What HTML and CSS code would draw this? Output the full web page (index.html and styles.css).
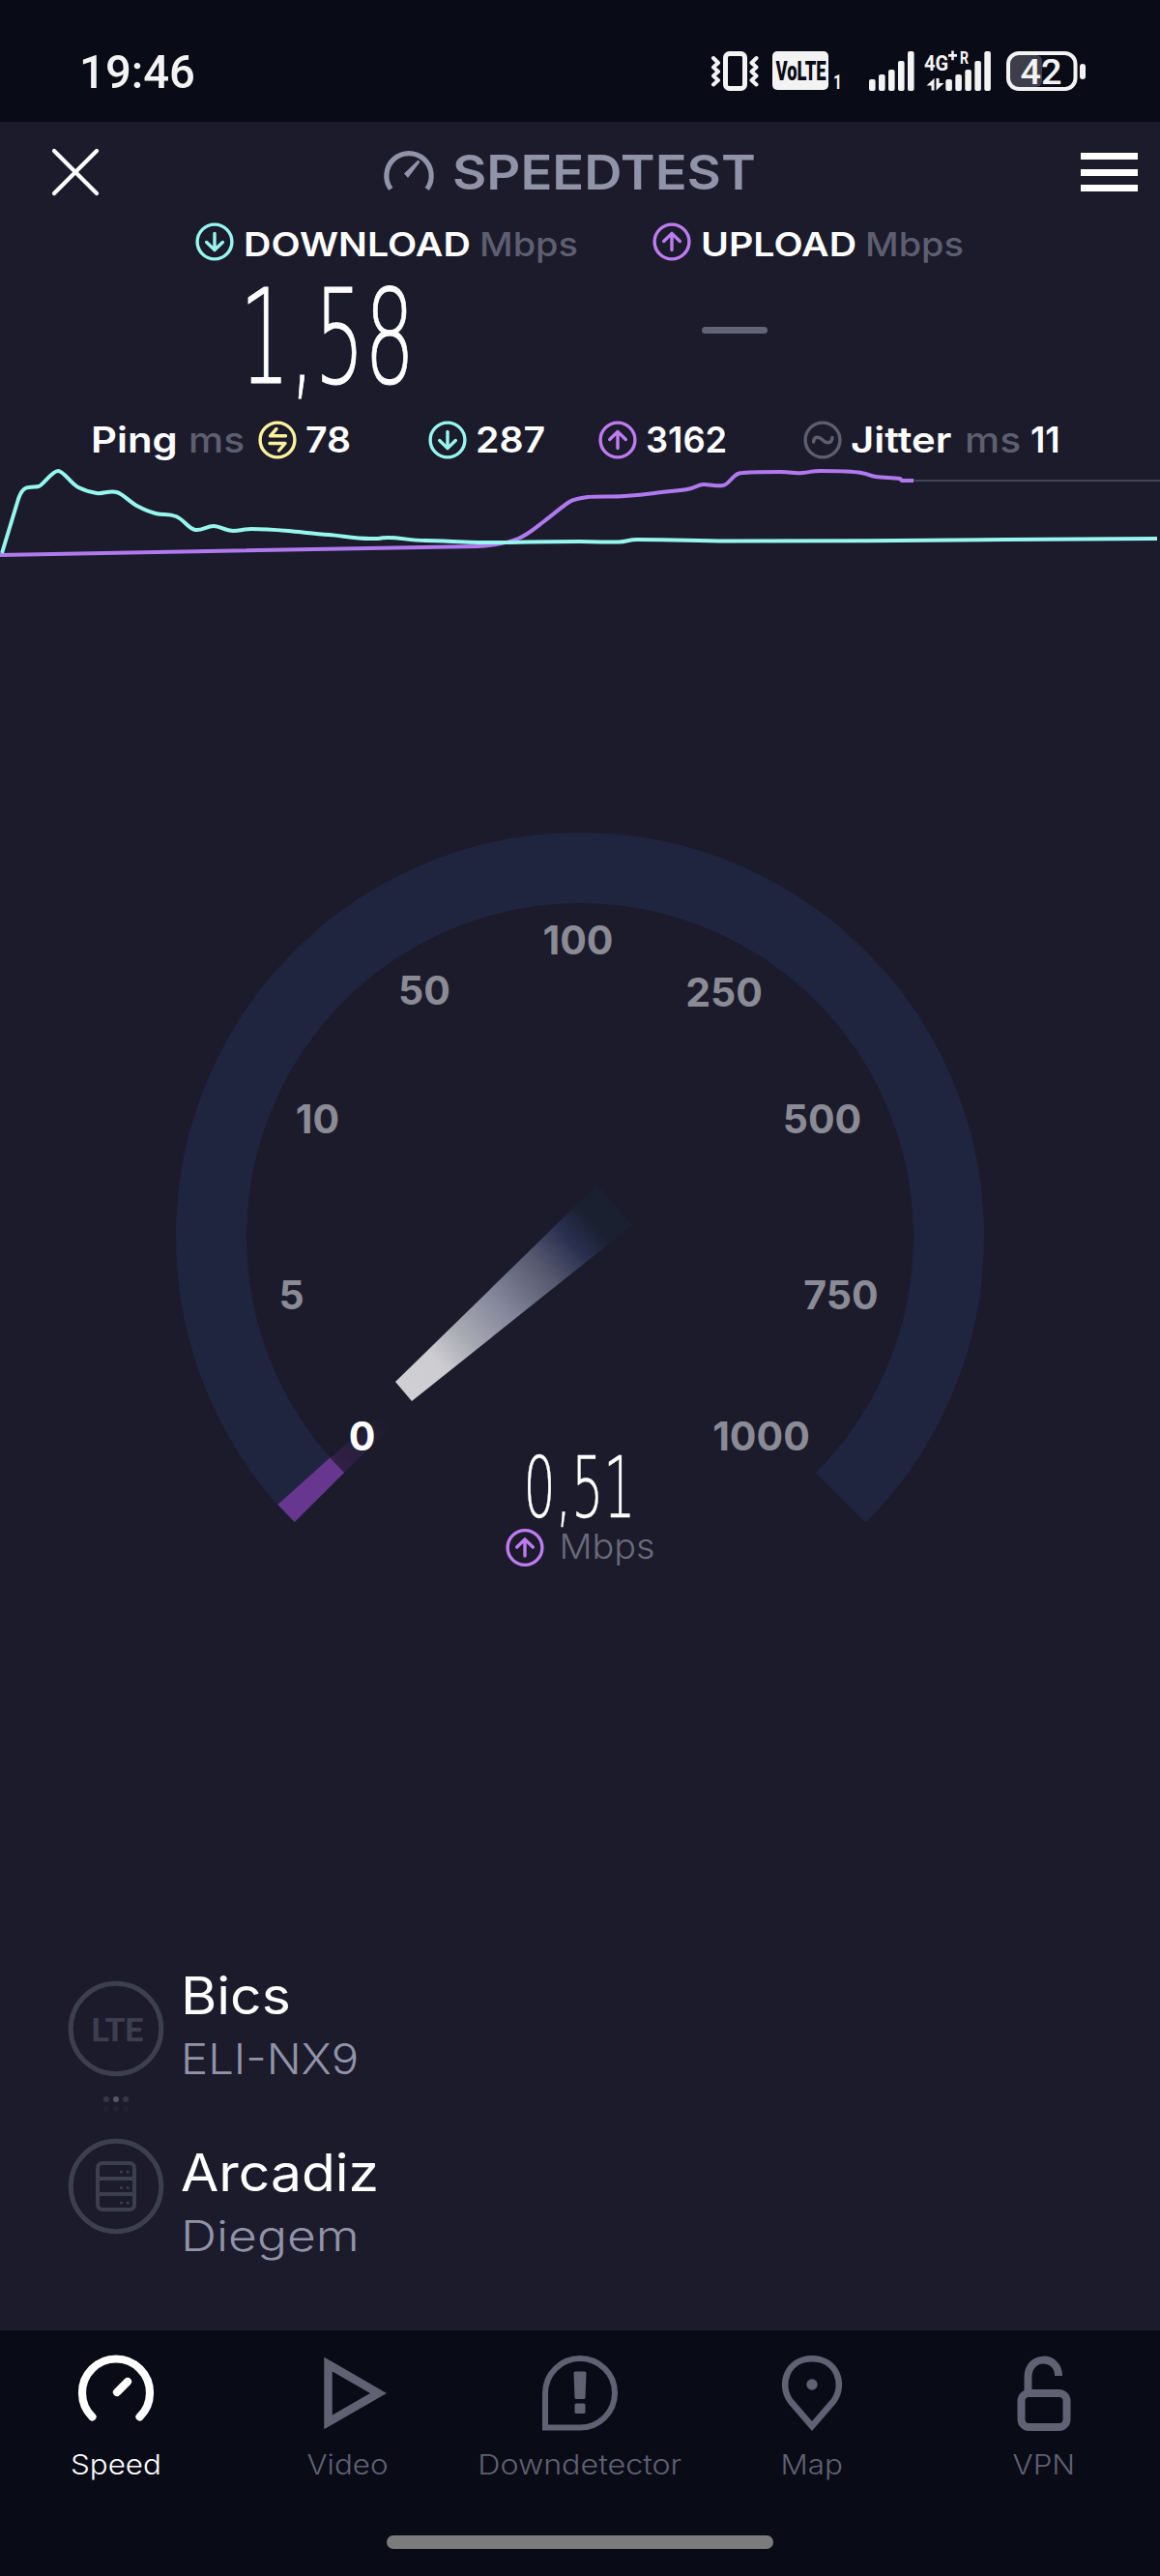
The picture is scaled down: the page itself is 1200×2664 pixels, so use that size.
FILE: index.html
```html
<!DOCTYPE html>
<html lang="en">
<head>
  <meta charset="UTF-8" />
  <meta name="viewport" content="width=device-width, initial-scale=1.0"/>
  <title>Speedtest</title>
  <link rel="stylesheet" href="styles.css">
</head>
<body>
<!-- Shared icons -->
<svg class="defs" width="0" height="0">
  <symbol id="down" viewBox="0 0 40 40">
    <circle cx="20" cy="20" r="17.9"/>
    <path d="M20 11.5V28M11.7 20.5L20 28.6L28.3 20.5"/>
  </symbol>
  <symbol id="up" viewBox="0 0 40 40">
    <circle cx="20" cy="20" r="17.9"/>
    <path d="M20 28.5V12M11.7 19.5L20 11.4L28.3 19.5"/>
  </symbol>
  <symbol id="idle" viewBox="0 0 40 40">
    <circle cx="20" cy="20" r="17.9"/>
    <path d="M19 8.500L12.500 15.800H28.500M12 23.500H28L21.500 31"/>
  </symbol>
  <symbol id="jitter" viewBox="0 0 40 40">
    <circle cx="20" cy="20" r="17.9"/>
    <path d="M10.5 22C11 16 16 16 20 20S29.500 24 30 17.500"/>
  </symbol>
</svg>

<div class="app">
  <!-- Status bar -->
  <div class="status-bar">
    <svg width="1200" height="126" viewBox="0 0 1200 126">
      <g class="status-text">
        <text x="82" y="91" font-size="49" textLength="120" lengthAdjust="spacingAndGlyphs">19:46</text>
        <text x="956" y="73" font-size="22" font-weight="700" textLength="25" lengthAdjust="spacingAndGlyphs">4G</text>
        <text x="993" y="66" font-size="18" font-weight="700" textLength="9" lengthAdjust="spacingAndGlyphs">R</text>
        <text x="862" y="92" font-size="20" font-weight="700" textLength="9" lengthAdjust="spacingAndGlyphs">1</text>
      </g>
      <rect x="750.5" y="55.500" width="20" height="36" rx="4" class="line5"/>
      <path class="line4" d="M738 60L743 65L738 69.500L743 74L738 78.500L743 83L738 87.500M782.500 60L777.500 65L782.500 69.500L777.500 74L782.500 78.500L777.500 83L782.500 87.500"/>
      <rect x="799" y="53" width="58" height="40" rx="5" class="solid"/>
      <text x="802.500" y="83" class="volte" textLength="52" lengthAdjust="spacingAndGlyphs">VoLTE</text>
      <g class="solid">
        <rect x="899" y="82" width="6.600" height="12" rx="2"/>
        <rect x="909" y="77" width="6.600" height="17" rx="2"/>
        <rect x="919" y="72" width="6.600" height="22" rx="2"/>
        <rect x="929" y="63" width="6.600" height="31" rx="2"/>
        <rect x="939" y="53" width="6.600" height="41" rx="2"/>
        <rect x="978.300" y="82" width="6.600" height="12" rx="2"/>
        <rect x="988.300" y="77" width="6.600" height="17" rx="2"/>
        <rect x="998.300" y="72" width="6.600" height="22" rx="2"/>
        <rect x="1008.300" y="63" width="6.600" height="31" rx="2"/>
        <rect x="1018.300" y="53" width="6.600" height="41" rx="2"/>
        <path d="M981 56h3.200v-3.500h2.600v3.500h3.200v2.800h-3.200v3.500h-2.600v-3.500h-3.200z"/>
        <path d="M966.500 81V93.500H963.500V88.500H958.500zM968.500 93.500V81H971.500V86H976.500z"/>
        <rect x="1117" y="66" width="6" height="16" rx="3"/>
      </g>
      <rect x="1045" y="57" width="33" height="33" rx="6" fill="#3e3e4a"/>
      <rect x="1043" y="55" width="69.500" height="37" rx="11" class="line4"/>
      <text x="1055.500" y="87" class="status-text" font-size="37" textLength="43" lengthAdjust="spacingAndGlyphs">42</text>
    </svg>
  </div>

  <!-- Header -->
  <div class="header">
    <svg class="close" width="52" height="52" viewBox="0 0 52 52"><path d="M4 4L48 48M48 4L4 48"/></svg>
    <div class="brand">
      <svg width="54" height="48" viewBox="0 0 54 48">
        <path d="M8.300 44.500A23.200 23.200 0 1 1 45.700 44.500" fill="none" stroke="#9193a8" stroke-width="5.200"/>
        <path d="M22 28.500L36.500 14.500L38.500 16.500L26 33z" fill="#9193a8"/>
      </svg>
      <span>SPEEDTEST</span>
    </div>
    <div class="menu"><i></i><i></i><i></i></div>
  </div>

  <!-- Download / upload -->
  <div class="rates">
    <svg class="icon cyan"><use href="#down"/></svg>
    <b>DOWNLOAD</b>
    <span>Mbps</span>
    <svg class="icon purple"><use href="#up"/></svg>
    <b>UPLOAD</b>
    <span>Mbps</span>
  </div>
  <div class="values">
    <svg width="200" height="155" viewBox="0 0 200 155">
      <text class="thin big" x="8" y="121" textLength="181" lengthAdjust="spacingAndGlyphs">1,58</text>
    </svg>
    <div class="empty"></div>
  </div>

  <!-- Latency -->
  <div class="latency">
    <b>Ping</b>
    <span>ms</span>
    <svg class="icon yellow"><use href="#idle"/></svg>
    <b class="num">78</b>
    <svg class="icon cyan"><use href="#down"/></svg>
    <b class="num">287</b>
    <svg class="icon purple"><use href="#up"/></svg>
    <b class="ones">3162</b>
    <svg class="icon gray"><use href="#jitter"/></svg>
    <b>Jitter</b>
    <span>ms</span>
    <b class="ones">11</b>
  </div>

  <svg class="graph" width="1200" height="121" viewBox="0 479 1200 121">
    <path stroke="#434453" stroke-width="2" d="M945 497H1200"/>
    <path stroke="#b07aee" d="M0 574L494 565C502 565 507 564 513 563Q526 561 536 557C546 553 555 545 563 539S580 525 589 519C594 516 600 515 608 514C620 513 634 514 646 513Q663 512 677 510C690 508 700 508 711 506S721 501 728 501S741 503 748 502S758 489 768 489C782 488 794 488 807 488S820 490 830 489S839 487 849 487S880 487 891 489S898 492 906 493S920 494 931 495L933 497H945"/>
    <path stroke="#97f7ef" d="M2 572L19 516Q23 504 30 504C35 503 36 504 40 503S54 487 60 487S73 500 81 504S93 509 100 510S113 507 120.500 509S134 519 141.500 523S153 529 161 531S174 531 182 534S195 547 202 548S214 544 221 544S233 549 241 549S252 547 260 547S286 548 298 549S326 552 340 553S366 557 383 557S390 556 402 556S425 559 440 559S485 561 505 561S560 560 600 560C620 560 627 561 640 560.500C649 560 650 558 659 558C700 558 710 559 753 559.500S990 559 1040 558L1197 557"/>
  </svg>

  <!-- Gauge -->
  <svg class="gauge" width="1200" height="1040" viewBox="0 600 1200 1040">
    <defs>
      <linearGradient id="needle" gradientUnits="userSpaceOnUse" x1="417" y1="1439" x2="635" y2="1246">
        <stop offset="0" stop-color="#cfcfd4"/>
        <stop offset=".16" stop-color="#cdcdd1"/>
        <stop offset=".3" stop-color="#a6a8b1"/>
        <stop offset=".47" stop-color="#83859a"/>
        <stop offset=".66" stop-color="#55586e"/>
        <stop offset=".8" stop-color="#29304f"/>
        <stop offset=".9" stop-color="#1b2031"/>
        <stop offset="1" stop-color="#1b2030"/>
      </linearGradient>
      <linearGradient id="trail" gradientUnits="userSpaceOnUse" x1="348" y1="1516" x2="400" y2="1468">
        <stop offset="0" stop-color="#332047"/>
        <stop offset="1" stop-color="#1b1b2c"/>
      </linearGradient>
    </defs>
    <path d="M330.240 1548.760A381.500 381.500 0 1 1 869.760 1548.760" fill="none" stroke="#20253f" stroke-width="73"/>
    <path d="M341 1508L392 1465L408 1473L356 1523z" fill="url(#trail)"/>
    <path d="M287.300 1556L341.300 1507.600L356 1523L304.800 1574z" fill="#67368f"/>
    <path d="M409 1429L617.500 1225.500L654 1267L426 1449z" fill="url(#needle)"/>
    <g class="scale">
      <text x="374.500" y="1500" class="on">0</text>
      <text x="301.500" y="1354">5</text>
      <text x="328.500" y="1172">10</text>
      <text x="439" y="1039">50</text>
      <text x="598" y="987">100</text>
      <text x="749" y="1041">250</text>
      <text x="850.500" y="1172">500</text>
      <text x="870" y="1354">750</text>
      <text x="787.500" y="1500">1000</text>
    </g>
    <text class="thin small" x="541.500" y="1568.500" textLength="116" lengthAdjust="spacingAndGlyphs">0,51</text>
    <use href="#up" class="purple ring" x="523" y="1580.500" width="40" height="40"/>
    <text class="unit" x="578.500" y="1611.500" textLength="99" lengthAdjust="spacingAndGlyphs">Mbps</text>
  </svg>

  <!-- Provider and server -->
  <div class="servers">
    <div class="server-icons">
      <svg width="100" height="100" viewBox="0 0 100 100">
        <circle cx="50" cy="50" r="46.800"/>
        <text x="24.500" y="62.500">LTE</text>
      </svg>
      <svg width="100" height="63" viewBox="0 0 100 63">
        <g stroke="none">
          <circle cx="40" cy="23" r="3" fill="#353646"/><circle cx="50" cy="23" r="3" fill="#565663"/><circle cx="60" cy="23" r="3" fill="#353646"/>
          <circle cx="40" cy="33" r="3" fill="#202031"/><circle cx="50" cy="33" r="3" fill="#222233"/><circle cx="60" cy="33" r="3" fill="#202031"/>
        </g>
      </svg>
      <svg width="100" height="100" viewBox="0 0 100 100">
        <circle cx="50" cy="50" r="46.800"/>
        <rect x="31" y="26" width="38" height="48" rx="5" stroke-width="4"/>
        <path d="M31 42H69M31 58H69" stroke-width="4"/>
        <path d="M55.500 35h.1M62.200 35h.1M55.500 51.500h.1M62.200 51.500h.1M55.500 67h.1M62.200 67h.1" stroke-width="3.200" stroke-linecap="round"/>
      </svg>
    </div>
    <div class="server-info">
      <h2>Bics</h2>
      <p>ELI-NX9</p>
      <h2>Arcadiz</h2>
      <p class="city">Diegem</p>
    </div>
  </div>

  <!-- Bottom navigation -->
  <div class="nav">
    <div class="tab active">
      <svg width="90" height="90" viewBox="0 0 90 90"><path d="M20.500 69.500A35 35 0 1 1 69.500 69.500M46 44L57 33" stroke-width="8.200" stroke-linecap="round"/></svg>
      <span>Speed</span>
    </div>
    <div class="tab">
      <svg width="90" height="90" viewBox="0 0 90 90"><path d="M24.500 15L76.500 45L24.500 75z" stroke-width="8.500"/></svg>
      <span>Video</span>
    </div>
    <div class="tab">
      <svg width="90" height="90" viewBox="0 0 90 90"><path d="M45 9A36 35.750 0 0 1 45 80.500H9V45A36 36 0 0 1 45 9z" stroke-width="6"/><path d="M40 24H50L49 49.500H41zM41 57H49V64.500H41z" fill="#606172" stroke-width="3" stroke-linejoin="round"/></svg>
      <span class="wide">Downdetector</span>
    </div>
    <div class="tab">
      <svg width="90" height="90" viewBox="0 0 90 90"><path d="M45 79L22.500 53C10 35 20 9.300 45 9.300S80 35 67.500 53z" stroke-width="6.500"/><circle cx="45" cy="36" r="5.700" fill="#606172" stroke="none"/></svg>
      <span>Map</span>
    </div>
    <div class="tab">
      <svg width="90" height="90" viewBox="0 0 90 90"><rect x="21.500" y="45" width="47" height="35" rx="8" stroke-width="8"/><path d="M28.500 45V28C28.500 5 60 5 60 27" stroke-width="8"/></svg>
      <span>VPN</span>
    </div>
  </div>
  <div class="home"><i></i></div>
</div>
</body>
</html>
```
FILE: styles.css
```css
* { box-sizing: border-box; }
body {
  margin: 0;
  font-family: 'Inter', sans-serif;
  background: #1b1b2c;
  color: #fff;
}
svg { display: block; overflow: visible; }
.defs { position: absolute; }
.app { width: 1200px; height: 2664px; overflow: hidden; }

.status-bar { height: 126px; background: #090b17; }
.status-text { font-family: 'Roboto', sans-serif; font-weight: 500; fill: #f3f3f3; }
.solid { fill: #f3f3f3; }
.line4, .line5 { fill: none; stroke: #f3f3f3; stroke-width: 4; stroke-linejoin: round; stroke-linecap: round; }
.line5 { stroke-width: 5; }
.volte { font-family: 'Roboto', sans-serif; font-weight: 900; font-size: 27px; fill: #090b17; }

.header {
  height: 104px; padding: 0 23px 0 52px;
  display: flex; align-items: center;
}
.close { fill: none; stroke: #fff; stroke-width: 4.2; stroke-linecap: round; }
.brand {
  display: flex; align-items: center; gap: 18px;
  margin-left: 292px;
  color: #9193a8; font-size: 50px; font-weight: 600; line-height: 60px;
}
.brand svg { margin-top: -6px; }
.brand span { transform: scaleX(1.087); transform-origin: left; }
.menu { display: flex; flex-direction: column; gap: 9.5px; margin-left: auto; }
.menu i { width: 59px; height: 7px; background: #fff; }

.icon { width: 40px; height: 40px; }
.icon, .ring { fill: none; stroke-width: 3.4; stroke-linecap: round; stroke-linejoin: round; }
.cyan { stroke: #97f7ef; }
.purple { stroke: #bf7bf0; }
.yellow { stroke: #fdf29b; }
.gray { stroke: #5d5f70; }

.rates {
  display: grid; height: 45px; align-items: center;
  grid-template-columns: 50px 244px 179px 50px 170px 120px;
  padding-left: 202px; font-size: 34.5px; white-space: nowrap;
}
.rates .icon { margin-top: -6px; }
.rates b, .latency b { font-weight: 600; transform: scaleX(1.14); transform-origin: left; }
.rates span, .latency span { color: #5d5f70; font-weight: 500; transform: scaleX(1.1); transform-origin: left; }
.values { display: flex; height: 155px; align-items: center; padding-left: 240px; gap: 286px; }
.empty { width: 68px; height: 7px; margin-top: -23px; border-radius: 4px; background: #626374; }
.thin { font-family: 'DejaVu Sans', sans-serif; font-weight: 200; fill: #fff; stroke: #fff; }
.big { font-size: 135px; stroke-width: 1px; }
.small { font-size: 88px; stroke-width: .5px; }

.latency {
  display: grid; height: 49px; align-items: center;
  grid-template-columns: 101px 72px 49px 127px 49px 127px 49px 163px 49px 118px 68px 60px;
  padding-left: 94px; font-size: 37px; white-space: nowrap;
}
.latency b { transform: scaleX(1.13); }
.latency .num { transform: scaleX(1.06); }
.latency .ones { transform: scaleX(.98); }
.graph { fill: none; stroke-width: 4; }

.scale { font-size: 41px; font-weight: 700; fill: #8b8b95; text-anchor: middle; }
.scale .on { fill: #fff; }
.unit { font-size: 36px; font-weight: 300; fill: #6a6b7b; }

.servers { display: flex; height: 770px; padding: 391px 0 0 70px; }
.server-icons { padding-top: 17px; fill: none; stroke: #3d3e4e; stroke-width: 5; }
.server-icons text { font-family: 'Roboto', sans-serif; font-size: 34px; font-weight: 700; letter-spacing: -1.500px; letter-spacing: -.5px; fill: #3d3e4e; stroke: none; }
.server-info { padding-left: 17px; }
.server-info h2, .server-info p { transform: scaleX(1.075); transform-origin: left; }
.server-info h2 { margin: 0; font-size: 53px; font-weight: 400; line-height: 66px; }
.server-info p { margin: 0 0 52px; font-size: 44px; font-weight: 300; line-height: 65px; color: #9193a8; }
.server-info .city { transform: scaleX(1.17); }

.nav { display: flex; height: 190px; padding-top: 20px; background: #090b17; }
.tab {
  width: 240px; display: flex; flex-direction: column; align-items: center;
  color: #606172; font-size: 28px; font-weight: 300; line-height: 40px;
}
.tab svg { fill: none; stroke: #606172; margin-bottom: 9px; }
.tab span { transform: scaleX(1.12); }
.tab .wide { transform: scaleX(1.15); }
.tab.active { color: #fff; }
.tab.active svg { stroke: #fff; }
.home { height: 64px; padding: 22px 400px; background: #090b17; }
.home i { display: block; height: 14px; border-radius: 7px; background: #7b7b7d; }
```
